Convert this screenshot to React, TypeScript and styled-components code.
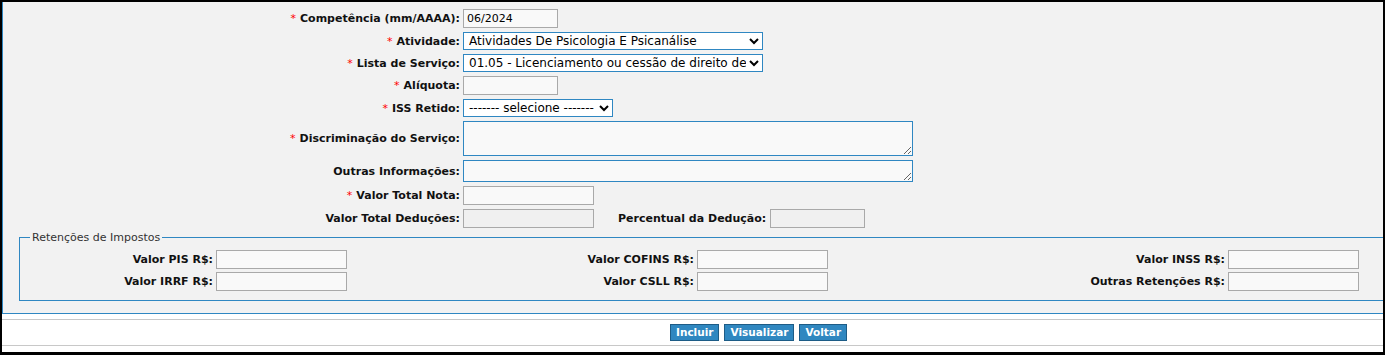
import styled, { createGlobalStyle } from 'styled-components';

const GlobalStyle = createGlobalStyle`
  body {
    margin: 0;
    background: #fff;
    font-family: "DejaVu Sans", Verdana, sans-serif;
    font-size: 11px;
  }
`;

const Frame = styled.div`
  width: 1385px;
  height: 355px;
  box-sizing: border-box;
  border-style: solid;
  border-color: #000;
  border-width: 2px 2px 3px 2px;
  background: #fff;
  overflow: hidden;
`;

const Panel = styled.div`
  background: #f2f2f2;
  border-left: 1px solid #2f87c2;
  border-bottom: 1px solid #2f87c2;
  padding: 7px 0 12px 0;
`;

const FormGrid = styled.div`
  display: grid;
  grid-template-columns: 457px auto;
  column-gap: 3px;
  row-gap: 4px;
  align-items: center;
  justify-items: start;
`;

const Label = styled.label`
  justify-self: end;
  font-weight: bold;
  color: #111;
  white-space: nowrap;
`;

const Req = styled.span`
  color: #f00;
  font-weight: normal;
  margin-right: 4px;
`;

const TextInput = styled.input<{ $w: number }>`
  width: ${(p) => p.$w}px;
  height: 19px;
  box-sizing: border-box;
  padding: 0 3px;
  margin: 0;
  border: 1px solid #a9a9a9;
  background: ${(p) => (p.disabled ? '#f0f0f0' : '#f9f9f9')};
  font-family: "DejaVu Sans", Verdana, sans-serif;
  font-size: 11px;
  color: #000;
  outline: none;
`;

const Select = styled.select<{ $w: number }>`
  width: ${(p) => p.$w}px;
  height: 18px;
  box-sizing: border-box;
  margin: 0;
  padding: 0 0 0 1px;
  border: 1px solid #2f87c2;
  border-radius: 0;
  background: #fff;
  font-family: "DejaVu Sans", Verdana, sans-serif;
  font-size: 12px;
  color: #000;
`;

const TextArea = styled.textarea<{ $h: number }>`
  width: 450px;
  height: ${(p) => p.$h}px;
  box-sizing: border-box;
  margin: 0;
  padding: 2px 3px;
  border: 1px solid #2f87c2;
  background: #f9f9f9;
  font-family: "DejaVu Sans", Verdana, sans-serif;
  font-size: 11px;
  display: block;
`;

const InlineFields = styled.div`
  display: flex;
  align-items: center;
`;

const SideLabel = styled(Label)`
  margin: 0 4px 0 24px;
`;

const Fieldset = styled.fieldset`
  margin: 3px -20px 0 16px;
  padding: 6px 0 9px 1px;
  border: 1px solid #2f87c2;
  min-width: 0;
`;

const Legend = styled.legend`
  margin-left: 9px;
  padding: 0 2px;
  color: #333;
  font-size: 11px;
`;

const TaxGrid = styled.div`
  display: grid;
  grid-template-columns: 326px 481px 531px;
  row-gap: 3px;
`;

const TaxCell = styled.div`
  display: flex;
  justify-content: flex-end;
  align-items: center;
  gap: 3px;
`;

const Footer = styled.div`
  padding-top: 5px;
`;

const ButtonBar = styled.div`
  height: 25px;
  border-top: 1px solid #c8c8c8;
  border-bottom: 1px solid #c8c8c8;
  display: flex;
  align-items: center;
  gap: 5px;
  padding-left: 668px;
`;

const Button = styled.button`
  height: 17px;
  padding: 0 5px;
  margin: 0;
  border: 1px solid #1d5c86;
  background: #2f87c0;
  color: #fff;
  font-family: "DejaVu Sans", Verdana, sans-serif;
  font-size: 10.5px;
  font-weight: bold;
  line-height: 15px;
`;

const taxes: [string, string, string][] = [
  ['Valor PIS R$:', 'Valor COFINS R$:', 'Valor INSS R$:'],
  ['Valor IRRF R$:', 'Valor CSLL R$:', 'Outras Retenções R$:'],
];

const App = () => {
  return (
    <>
      <GlobalStyle />
      <Frame>
        <Panel>
          <FormGrid>
            <Label><Req>*</Req>Competência (mm/AAAA):</Label>
            <TextInput $w={95} defaultValue="06/2024" />

            <Label><Req>*</Req>Atividade:</Label>
            <Select $w={300} defaultValue="a">
              <option value="a">Atividades De Psicologia E Psicanálise</option>
            </Select>

            <Label><Req>*</Req>Lista de Serviço:</Label>
            <Select $w={300} defaultValue="l">
              <option value="l">01.05 - Licenciamento ou cessão de direito de uso de programas de computação</option>
            </Select>

            <Label><Req>*</Req>Alíquota:</Label>
            <TextInput $w={95} />

            <Label><Req>*</Req>ISS Retido:</Label>
            <Select $w={150} defaultValue="s">
              <option value="s">------- selecione -------</option>
            </Select>

            <Label><Req>*</Req>Discriminação do Serviço:</Label>
            <TextArea $h={35} />

            <Label>Outras Informações:</Label>
            <TextArea $h={22} />

            <Label><Req>*</Req>Valor Total Nota:</Label>
            <TextInput $w={131} />

            <Label>Valor Total Deduções:</Label>
            <InlineFields>
              <TextInput $w={131} disabled />
              <SideLabel>Percentual da Dedução:</SideLabel>
              <TextInput $w={95} disabled />
            </InlineFields>
          </FormGrid>

          <Fieldset>
            <Legend>Retenções de Impostos</Legend>
            <TaxGrid>
              {taxes.map((row) =>
                row.map((label) => (
                  <TaxCell key={label}>
                    <Label>{label}</Label>
                    <TextInput $w={131} />
                  </TaxCell>
                ))
              )}
            </TaxGrid>
          </Fieldset>
        </Panel>

        <Footer>
          <ButtonBar>
            <Button>Incluir</Button>
            <Button>Visualizar</Button>
            <Button>Voltar</Button>
          </ButtonBar>
        </Footer>
      </Frame>
    </>
  );
};

export default App;
